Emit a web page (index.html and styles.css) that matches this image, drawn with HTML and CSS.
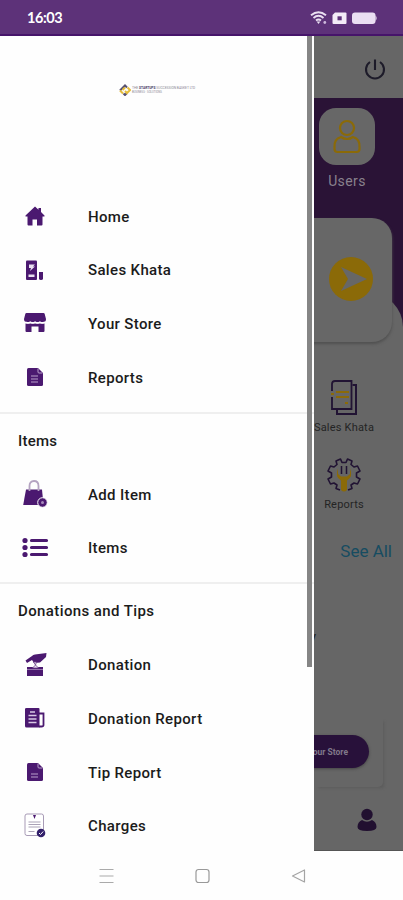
FILE: index.html
```html
<!DOCTYPE html>
<html lang="en">
<head>
<meta charset="utf-8">
<title>Menu</title>
<link rel="stylesheet" href="styles.css">
</head>
<body>
<header class="status">
  <span class="clock">16:03</span>
  <svg class="status-icons" width="68" height="16" viewBox="0 0 68 16">
    <g fill="none" stroke="#eadff2" stroke-width="1.9"><path d="M1 5.3Q8.500-1 16 5.300M3.500 8Q8.500 3.700 13.500 8M6 10.500Q8.500 8.500 11 10.500"/></g>
    <path d="M6.700 11.500h3.600L8.500 14z" fill="#eadff2"/><circle cx="14.800" cy="12.500" r="1.400" fill="#cdb8dc"/>
    <path d="M25 2.500h10.500q1 0 1 1v9.500q0 1-1 1h-12q-1 0-1-1V5z" fill="#f3ecf7"/><path d="M27.500 6.300h4.200v4h-4.200z" fill="#5d3279"/>
    <rect x="42" y="2.500" width="23.500" height="11.500" rx="3" fill="#eadff2"/><path d="M65.500 5.500q2.300 2.700 0 5.500z" fill="#eadff2"/>
  </svg>
</header>
<main class="screen">
  <nav class="drawer">
    <div class="brand">
      <svg width="12" height="12" viewBox="0 0 12 12" fill="none" stroke-width="2"><path d="M1 6.500L6 1.500L8 3.500M4.500 9.500L6 11L8 9" stroke="#565071"/><path d="M8.500 3.500L11 6L8 9L6 7M1 6.500L4 9.500M3.500 6L6 3.500" stroke="#e6bd3a"/></svg>
      <div class="brand-text"><p>THE <b>STARTUPS</b> SUCCESSION BASKET LTD</p><p class="brand-sub">BUSINESS · SOLUTIONS</p></div>
    </div>
    <ul>
      <li><svg viewBox="0 0 28 28"><path d="M14 4.500L4.500 13.500V14.500H6.500V22.500Q6.500 23.500 7.500 23.500H11.500V17.500H16V23.500H20.500Q21.500 23.500 21.500 22.500V14.500H23.500V13.500L20 10V6H17.500V7.700Z"/></svg><span>Home</span></li>
      <li><svg viewBox="0 0 28 28"><path d="M6 4.500h9q1 0 1 1V23q0 1-1 1H6q-1 0-1-1V5.500q0-1 1-1z"/><path d="M18 16h4v6.500q0 1.500-2 1.500t-2-1.500z"/><path d="M8 8.500h6l-2 2h2L9 15l1-3H8zM7.500 18.500h6V21h-6z" fill="#e9dff0"/></svg><span>Sales Khata</span></li>
      <li><svg viewBox="0 0 28 28"><path d="M5.500 4h17q1 0 1.200 1l1.300 5q0 3-2.500 3H5.500Q3 13 3 10l1.300-5q.2-1 1.200-1z"/><path d="M4.500 14.500h19V22q0 1-1 1h-5v-5.500h-7V23h-5q-1 0-1-1z"/><path d="M4.500 13q2.400 2 4.800 0 2.400 2 4.800 0 2.400 2 4.800 0 2.400 2 4.800 0" fill="none" stroke="#fff" stroke-width="1.300"/></svg><span>Your Store</span></li>
      <li><svg viewBox="0 0 28 28"><path d="M7.500 5H17l5 5v11.500q0 1.500-1.500 1.500h-13Q6 23 6 21.500v-15Q6 5 7.500 5z"/><path d="M17 5.500V9q0 1 1 1h3.500M10 13h7M10 16h7M10 19h7" fill="none" stroke="#baa0cb" stroke-width="1"/></svg><span>Reports</span></li>
    </ul>
    <section>
      <h2>Items</h2>
      <ul>
        <li><svg viewBox="0 0 28 28"><path d="M5 9.500h16L22.500 25H2.200z"/><path d="M8.500 11V6q0-5 4.500-5t4.500 5v5" fill="none" stroke="#b5a4c2" stroke-width="1.800"/><circle cx="21.500" cy="22.500" r="4.800" stroke="#fff"/><circle cx="21.500" cy="22.500" r="1.500" fill="#a78abb"/></svg><span>Add Item</span></li>
        <li><svg viewBox="0 0 28 28"><circle cx="4" cy="6.500" r="2.600"/><circle cx="4" cy="13.500" r="2.600"/><circle cx="4" cy="20.500" r="2.600"/><path d="M10.500 6.500h15M10.500 13.500h15M10.500 20.500h15" fill="none" stroke="#4b1970" stroke-width="3.200" stroke-linecap="round"/></svg><span>Items</span></li>
      </ul>
    </section>
    <section>
      <h2 class="wide">Donations and Tips</h2>
      <ul>
        <li><svg viewBox="0 0 28 28"><path d="M4.500 9.500L11 5Q12 3.500 14 3.500L25.500 2l-.5 4-6 5.500-6 .5-2-3-5 3z"/><path d="M6 16h16v9H6z"/><path d="M12.500 11h3L14.500 14l3 3h-6l3-3z" fill="#e9dff0" stroke="#6a4386" stroke-width=".8"/><path d="M6 18.500h16" stroke="#a78abb" stroke-width=".8"/></svg><span>Donation</span></li>
        <li><svg viewBox="0 0 28 28"><path d="M5.500 4h12q1 0 1 1v18.500h-13q-1.500 0-1.500-1.500V5q0-1 1.500-1z"/><path d="M18 9.500h4.500V21q0 1.500-2 1.500H18" fill="none" stroke="#4b1970" stroke-width="1.800"/><path d="M9 8h5M7.500 11.500h8M7.500 15h8M7.500 18.500h8" stroke="#d8c8e3" stroke-width="1.300"/></svg><span>Donation Report</span></li>
        <li><svg viewBox="0 0 28 28"><path d="M7.500 5H17l5 5v11.500q0 1.500-1.500 1.500h-13Q6 23 6 21.500v-15Q6 5 7.500 5z"/><path d="M17 5.500V9q0 1 1 1h3.500M10 16h7M10 19h7" fill="none" stroke="#baa0cb" stroke-width="1"/></svg><span>Tip Report</span></li>
        <li><svg viewBox="0 0 28 28"><rect x="4" y="2" width="18.500" height="21.500" rx="2" fill="#fff" stroke="#a89bb6"/><path d="M7.500 10h12M7.500 12.500h12M7.500 15h12M7.500 19.500h6" stroke="#aaa2b6" stroke-width="1"/><path d="M12 3h3l-1.500 4z"/><circle cx="20" cy="21" r="4.300" fill="#33206b"/><path d="M18 21l1.500 1.500 2.700-3" fill="none" stroke="#fff" stroke-width="1"/></svg><span>Charges</span></li>
      </ul>
    </section>
    <i class="scrollbar"></i>
  </nav>
  <div class="page">
    <div class="topbar"><svg width="22" height="22" viewBox="0 0 22 22" fill="none" stroke="#1d1b29" stroke-width="2.100"><path d="M6 3a9 9 0 1 0 10 0M11 .5v10.500"/></svg></div>
    <div class="hero">
      <div class="tile"><svg width="30" height="36" viewBox="0 0 30 36" fill="none" stroke="#8b6a08" stroke-width="2.200"><circle cx="15" cy="9" r="7"/><path d="M9 18Q2 20 2.500 28v2q0 3 3 3h19q3 0 3-3v-2Q28 20 21 18q-6 4-12 0z"/></svg></div>
      <p class="tile-label">Users</p>
      <div class="curve"></div>
      <div class="card"><svg width="44" height="44" viewBox="0 0 44 44"><circle cx="22" cy="22" r="22" fill="#8b6a08"/><path d="M12 10L38 22L12 34L19 22z" fill="#676767"/></svg></div>
    </div>
    <div class="shortcuts">
      <svg width="28" height="36" viewBox="0 0 28 36" fill="none"><path d="M22.500 5H26v29H7v-4" stroke="#211333" stroke-width="2"/><path d="M2 11V4q0-3 3-3h16.500v28H2V17" stroke="#211333" stroke-width="1.800"/><path d="M6 12h13M6 17h13M15 23h3M1 14h3" stroke="#8b6a08" stroke-width="2"/></svg>
      <p>Sales Khata</p>
      <svg class="gear" width="36" height="36" viewBox="0 0 36 36" fill="none"><path d="M14 33L10 31.500L11 28L8 26L4.500 27L2 22L5.500 20V16L2 14L4.500 9L8 10L11 7.500L10 4L14.500 2L16 5.500H20L21.500 2L26 4L25 7.500L28 10L31.500 9L34 14L30.500 16V20L34 22L31.500 27L28 26L25 28L26 31.500L22 33" stroke="#211333" stroke-width="1.600" stroke-linejoin="round"/><path d="M12 11.500Q8.500 20 15 23.500V33q3 3 6 0V23.500Q27.500 20 24 11.500V17l-3 2.500h-6L12 17z" fill="#8b6a08"/><path d="M15.500 17V9M20.500 17V9" stroke="#211333" stroke-width="1.500"/></svg>
      <p>Reports</p>
    </div>
    <a class="see-all">See All</a>
    <p class="cut">y</p>
    <div class="promo"><span class="pill">Your Store</span></div>
    <div class="tabbar"><svg width="20" height="24" viewBox="0 0 20 24" fill="#211030"><circle cx="10" cy="6.500" r="5.700"/><path d="M5 12q5 3.500 10 0 4.500 2 4.500 7 0 4-9.500 4T.5 19Q.5 14 5 12z"/></svg></div>
  </div>
</main>
<footer class="sysnav">
  <svg width="15" height="16" viewBox="0 0 15 16" stroke="#aaa" stroke-width="1.200"><path d="M.5 1.500h14M.5 8h14M.5 14.500h14"/></svg>
  <svg width="15" height="16" viewBox="0 0 15 16" fill="none" stroke="#999" stroke-width="1.200"><rect x="1" y="1.500" width="13" height="13" rx="2.500"/></svg>
  <svg width="15" height="16" viewBox="0 0 15 16" fill="none" stroke="#a4a4a4" stroke-width="1.200"><path d="M13.500 2v12L1.500 8z" stroke-linejoin="round"/></svg>
</footer>
</body>
</html>
```
FILE: styles.css
```css
* { box-sizing: border-box; margin: 0; padding: 0; }
body { width: 403px; height: 900px; overflow: hidden; display: flex; flex-direction: column; background: #fefefe; font-family: Roboto, sans-serif; }
.status { height: 36px; flex: none; background: #5d3279; border-bottom: 2px solid #46146a; display: flex; justify-content: space-between; align-items: center; padding: 2px 25px 0 27px; }
.clock { color: #fff; font: 700 14.5px/18px Lato, sans-serif; letter-spacing: -.45px; }
.status-icons { display: block; }
.screen { height: 815px; flex: none; display: flex; }
.drawer { position: relative; width: 314px; flex: none; background: #fefefe; overflow: hidden; color: #1b1b1b; }
.brand { height: 153.500px; padding: 48px 0 0 119px; display: flex; gap: 1px; }
.brand-text { color: #8a8793; font-size: 3.3px; line-height: 5px; padding-top: 2px; white-space: nowrap; }
.brand-text b { color: #463a68; }
.brand-text .brand-sub { font-size: 2.8px; line-height: 3px; }
ul { list-style: none; }
li { height: 53.6px; display: flex; align-items: center; padding-left: 21px; gap: 39px; }
li svg { width: 28px; height: 28px; flex: none; fill: #4b1970; }
li span, h2 { font-size: 15px; font-weight: 500; line-height: 20px; letter-spacing: .35px; white-space: nowrap; }
li span { padding-top: 1px; }
section { margin-top: 8px; border-top: 2px solid #efefef; }
section + section { margin-top: 7.800px; }
section h2 { height: 53.6px; line-height: 54px; padding-left: 18px; letter-spacing: .2px; }
section h2.wide { letter-spacing: .4px; }
.scrollbar { position: absolute; right: 2px; top: 0; width: 5px; height: 631px; background: #858585; }
.page { width: 89px; flex: none; background: #666; overflow: hidden; display: flex; flex-direction: column; }
.topbar { height: 62px; flex: none; padding: 23px 0 0 50px; }
.hero { position: relative; height: 263px; flex: none; background: #2a1336; }
.tile { position: relative; width: 56px; height: 57px; margin-left: 5px; top: 10px; border-radius: 17px; background: #676767; display: flex; align-items: center; justify-content: center; }
.tile-label { margin-top: 17px; width: 66px; text-align: center; color: #89818d; font-size: 14px; line-height: 18px; letter-spacing: .4px; }
.curve { position: absolute; right: 0; top: 195px; width: 189px; height: 80px; border-radius: 0 34px 0 0; background: #666; }
.card { position: absolute; right: 11px; top: 120px; width: 300px; height: 124px; border-radius: 20px; background: #676767; box-shadow: 0 2px 3px #505050; }
.card svg { position: absolute; right: 19px; top: 39px; }
.shortcuts { padding-top: 19px; width: 60px; display: flex; flex-direction: column; align-items: center; }
.shortcuts svg { flex: none; }
.shortcuts p { width: 60px; display: flex; justify-content: center; white-space: nowrap; margin-top: 5px; font-size: 11px; line-height: 14px; color: #242424; letter-spacing: .2px; }
.shortcuts .gear { margin-top: 22px; }
.see-all { margin: 27px 11px 0 0; text-align: right; color: #164c61; font-size: 17px; line-height: 24px; white-space: nowrap; }
.cut { margin: 64px 0 0 -5px; font-size: 15px; line-height: 20px; color: #222; }
.promo { width: 69px; height: 70px; margin-top: 70px; padding-top: 18px; border-radius: 0 0 5px 0; box-shadow: 3px 3px 3px -2px #5b5b5b; flex: none; }
.pill { display: flex; align-items: center; justify-content: flex-end; width: 180px; height: 33px; margin-left: -125px; padding-right: 21px; border-radius: 17px; background: #28113a; color: #81798a; font-size: 8.500px; font-weight: 700; box-shadow: 0 1px 3px #444; }
.tabbar { margin-top: auto; height: 64px; flex: none; padding: 21px 0 0 43px; border-bottom: 1px solid #555; }
.sysnav { flex: 1; display: flex; align-items: center; padding-left: 99px; gap: 81px; }
```
